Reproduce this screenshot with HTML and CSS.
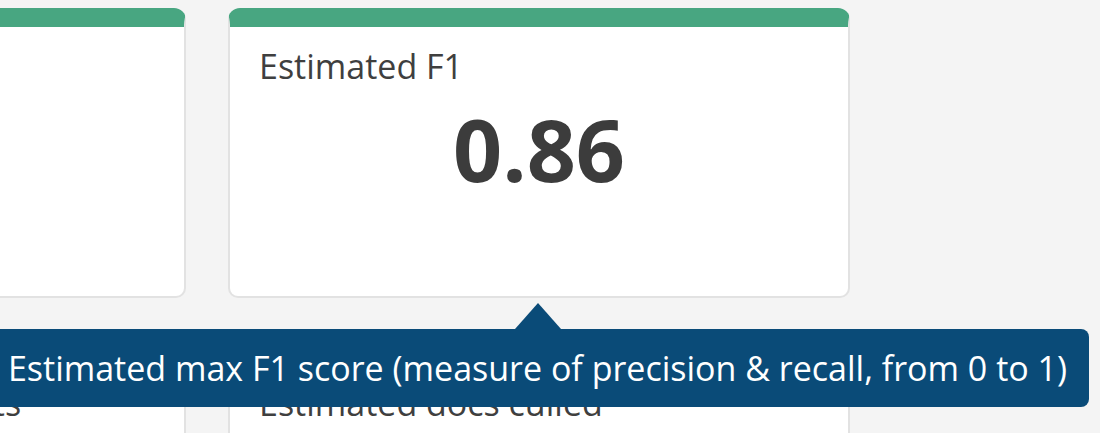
FILE: index.html
```html
<!DOCTYPE html>
<html lang="en">
<head>
<meta charset="utf-8">
<title>Metrics</title>
<link rel="stylesheet" href="styles.css">
</head>
<body>
<div class="viewport">
  <div class="grid">
    <div class="card">
      <div class="label">Estimated recall</div>
      <div class="value faded">90%</div>
    </div>
    <div class="card">
      <div class="label">Estimated F1</div>
      <div class="value">0.86</div>
    </div>
    <div class="card">
      <div class="label">Estimated total documents</div>
    </div>
    <div class="card">
      <div class="label">Estimated docs culled</div>
    </div>
  </div>
  <div class="tooltip">Estimated max F1 score (measure of precision &amp; recall, from 0 to 1)</div>
</div>
</body>
</html>
```

FILE: styles.css
```css
html, body {
  margin: 0;
  padding: 0;
  background: #f4f4f4;
  font-family: "Open Sans", "Noto Sans", sans-serif;
  color: #3f3f3f;
  overflow: hidden;
}

.viewport {
  position: relative;
  width: 1100px;
  height: 433px;
  overflow: hidden;
}

.grid {
  display: grid;
  grid-template-columns: 622px 622px;
  grid-auto-rows: 290px;
  column-gap: 42px;
  row-gap: 47px;
  margin-left: -436px;
  padding-top: 8px;
}

.card {
  background: #ffffff;
  border: 2px solid #e2e2e2;
  border-top: 19px solid #48a681;
  border-radius: 12px 12px 10px 10px;
  box-sizing: border-box;
  padding: 19px 29px 0;
}

.label {
  font-size: 34px;
  line-height: 40px;
  color: #3f3f3f;
  white-space: nowrap;
}

.value {
  margin-top: 20px;
  font-size: 86px;
  line-height: 86px;
  font-weight: 700;
  text-align: center;
  color: #3c3c3c;
}

.value.faded {
  color: #f6f6f6;
}

.tooltip {
  position: absolute;
  left: -14px;
  top: 329px;
  width: 1103px;
  height: 78px;
  box-sizing: border-box;
  background: #0a4b78;
  border-radius: 8px;
  color: #ffffff;
  font-size: 34px;
  line-height: 78px;
  text-align: center;
  white-space: nowrap;
}

.tooltip::before {
  content: "";
  position: absolute;
  left: 529px;
  top: -26px;
  border-left: 23px solid transparent;
  border-right: 23px solid transparent;
  border-bottom: 26px solid #0a4b78;
}
```
